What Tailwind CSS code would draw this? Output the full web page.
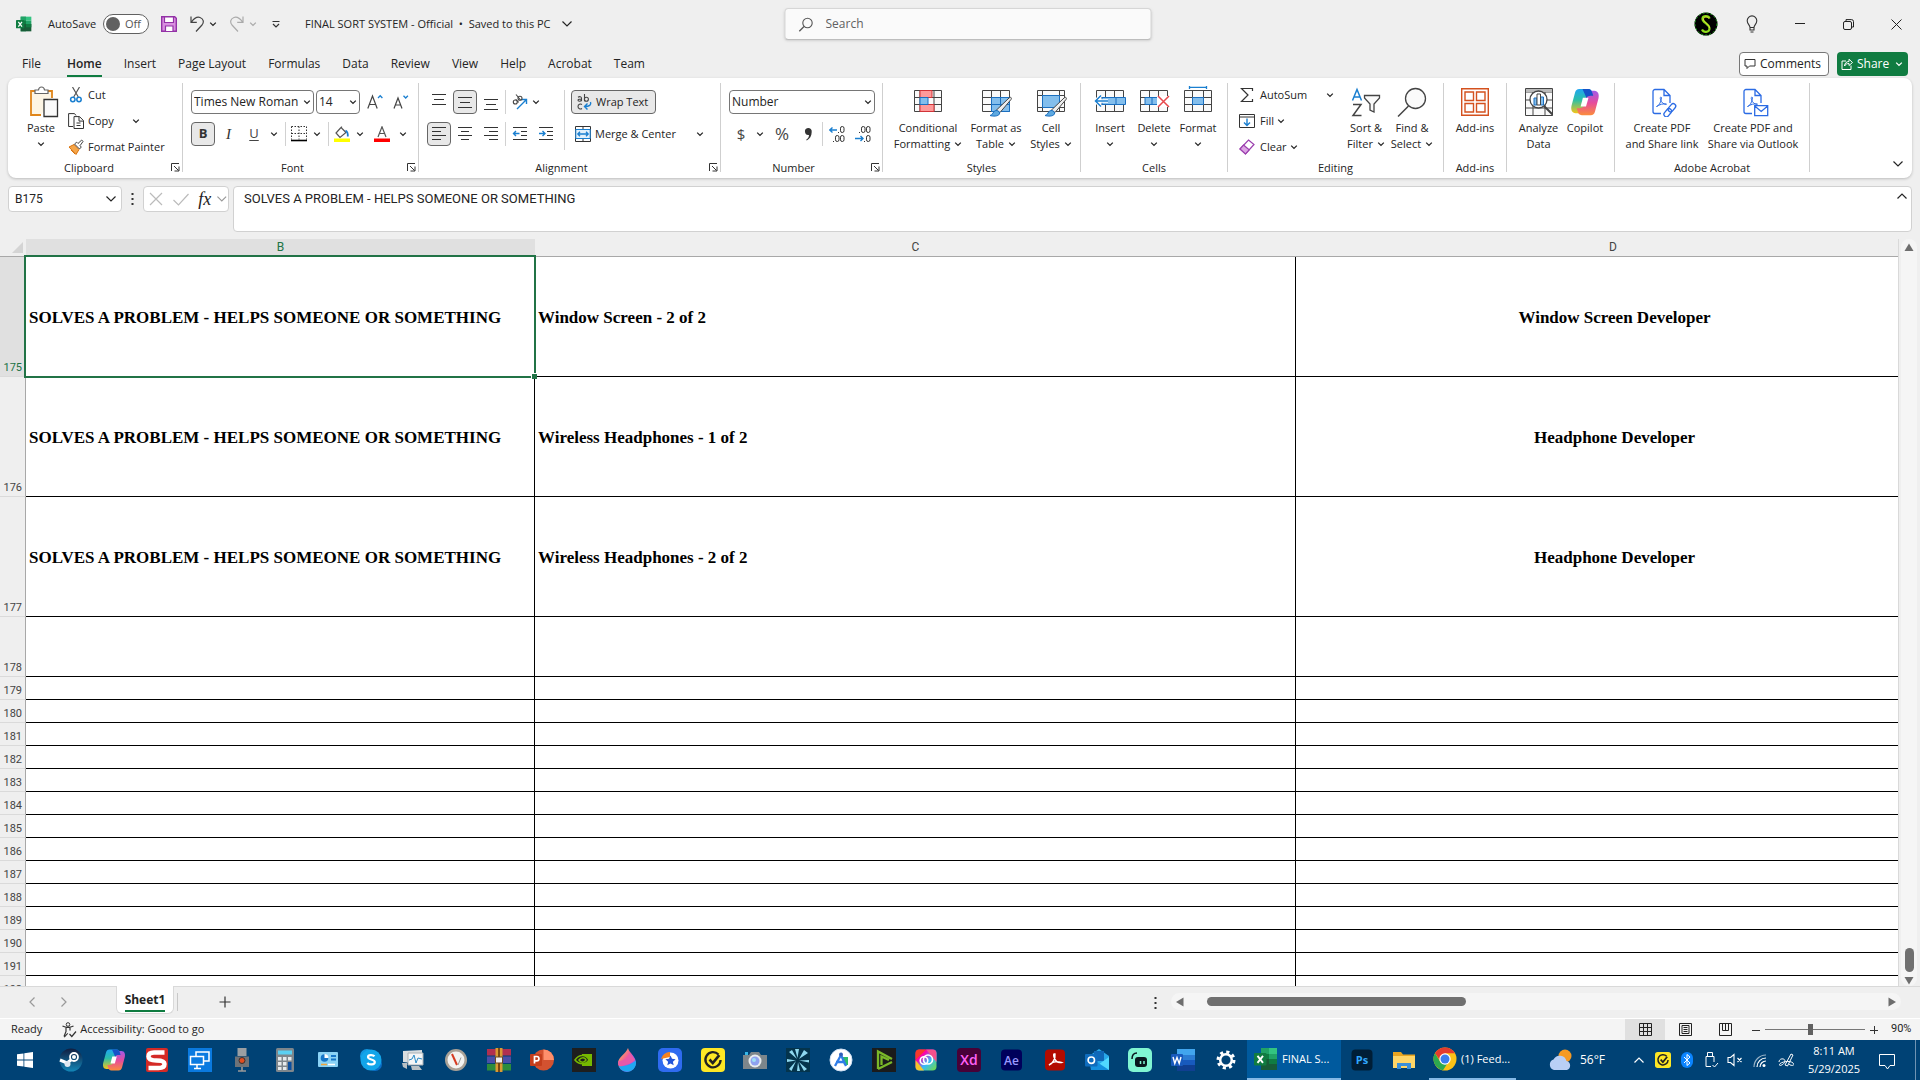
<!DOCTYPE html>
<html lang="en">
<head>
<meta charset="utf-8">
<title>FINAL SORT SYSTEM - Excel</title>
<script src="https://cdn.jsdelivr.net/npm/@tailwindcss/browser@4"></script>
</head>
<body class="h-screen overflow-hidden bg-[#efefef] font-['Open_Sans','Noto_Sans',sans-serif] text-[11px] text-[#242424]">
<svg class="absolute size-0" aria-hidden="true">
  <defs>
    <linearGradient id="cpA" x1="0" y1="0" x2="0" y2="1"><stop offset="0" stop-color="#1fa5f2"/><stop offset=".45" stop-color="#2bbfa8"/><stop offset="1" stop-color="#f5c518"/></linearGradient>
    <linearGradient id="cpB" x1="0" y1="0" x2="0" y2="1"><stop offset="0" stop-color="#a05be8"/><stop offset=".5" stop-color="#e74c9c"/><stop offset="1" stop-color="#fb8c3c"/></linearGradient>
    <linearGradient id="steamG" x1="0" y1="0" x2="0" y2="1"><stop offset="0" stop-color="#111d3f"/><stop offset="1" stop-color="#1387b8"/></linearGradient>
    <linearGradient id="ccG" x1="0" y1="0" x2="1" y2="1"><stop offset="0" stop-color="#f33"/><stop offset=".3" stop-color="#f0a"/><stop offset=".6" stop-color="#3bf"/><stop offset="1" stop-color="#7d3"/></linearGradient>
    <linearGradient id="paintG" x1="0" y1="0" x2="1" y2="1"><stop offset="0" stop-color="#ffd23c"/><stop offset=".45" stop-color="#f05a9b"/><stop offset=".65" stop-color="#8b5cf6"/><stop offset="1" stop-color="#22b8f0"/></linearGradient>
    <symbol id="chev" viewBox="0 0 8 8"><path d="M1.2 2.6 4 5.4l2.8-2.8" fill="none" stroke="currentColor" stroke-width="1.3"/></symbol>
    <symbol id="chevL" viewBox="0 0 12 12"><path d="M1.5 3.5 6 8l4.500-4.500" fill="none" stroke="currentColor" stroke-width="1.2"/></symbol>
    <symbol id="launch" viewBox="0 0 9 9"><path d="M.5 8V.5H8M3 3l4.500 4.500M8 3.500V8H3.500" fill="none" stroke="#333"/></symbol>
    <symbol id="copilot" viewBox="0 0 24 24">
      <path d="M7.500 1.500h7c2.200 0 3 1.500 3.500 3.500l.6 2h-2.300c-2.200 0-3 1-3.600 3l-2 7.500c-.6 2-1.500 3.500-3.700 3.500H4.500C1.500 21 .5 18 1.200 15L4 4.500c.6-2 1.500-3 3.500-3z" fill="url(#cpA)"/>
      <path d="M16.500 22.500h-7c-2.200 0-3-1.500-3.500-3.500l-.6-2h2.300c2.200 0 3-1 3.600-3l2-7.500C13.900 4.500 14.800 3 17 3h2.500c3 0 4 3 3.300 6L20 19.500c-.6 2-1.500 3-3.500 3z" fill="url(#cpB)"/>
      <path d="M10.300 8.500h4.500l-2 7H8.500z" fill="#fff"/><path d="M10 1.500h4.500c2.200 0 3 1.500 3.500 3.500l.6 2h-2.300c-1.500 0-2.500.6-3.100 1.700z" fill="#1553c8"/>
    </symbol>
    <symbol id="excel" viewBox="0 0 24 24"><path d="M7 1h8v22H7z" fill="#21a366"/><path d="M15 1h8v6h-8z" fill="#33c481"/><path d="M7 1h8v6H7z" fill="#21a366"/><path d="M7 7h8v5H7z" fill="#107c41"/><path d="M15 7h8v5h-8z" fill="#21a366"/><path d="M7 12h16v11H7z" fill="#185c37"/><path d="M15 12h8v5h-8z" fill="#107c41"/><rect y="6" width="12.500" height="12.500" rx="1" fill="#107c41"/><path d="m3.500 8.800 5.500 7M9 8.800l-5.500 7" stroke="#fff" stroke-width="1.900"/></symbol>
    <symbol id="norton" viewBox="0 0 24 24"><rect width="24" height="24" rx="4" fill="#fde725"/><path d="M17.500 6.500A7.600 7.600 0 1 0 19.600 12" fill="none" stroke="#222" stroke-width="2.300"/><path d="m8.500 11.500 3.300 3.600 6.500-8" fill="none" stroke="#222" stroke-width="2.600"/></symbol>
    <symbol id="pdf" viewBox="0 0 28 30"><path d="M11 26.500H5a2 2 0 0 1-2-2v-20a2 2 0 0 1 2-2h9l6 6V16M14 2.500v6h6" fill="none" stroke="#2b6be4" stroke-width="1.300"/><path d="M6.500 19.500c3-1 4.500-5 5-9-.9-1-1.700 0-1 2 1 3.500 3.500 5 6 4.700-3-1-7 .3-10 2.300z" fill="none" stroke="#2b6be4"/></symbol>
  </defs>
</svg>

<div class="flex h-full flex-col">
  <!-- Title bar -->
  <header class="relative flex h-12 shrink-0 items-center text-[11px]">
    <svg class="ml-4 size-4" viewBox="0 0 24 24"><use href="#excel"/></svg>
    <label for="autosave" class="ml-4 w-[51px]">AutoSave</label>
    <span class="relative ml-1 flex h-5 w-[46px] items-center rounded-full border border-[#616161] bg-white">
      <input id="autosave" type="checkbox" class="ml-[2px] size-[14px] appearance-none rounded-full bg-[#616161]"><span class="ml-[5px] text-[#555]">Off</span>
    </span>
    <button class="ml-3 size-4" aria-label="Save"><svg viewBox="0 0 16 16"><path d="M.7.7h13L15.300 2.300v13H.7z" fill="#d98fe0" stroke="#9332a6" stroke-width="1.400"/><path d="M3.500 1h9v5.500h-9zM4.500 10h7.500v5.500H4.500z" fill="#fff" stroke="#9332a6" stroke-width="1.200"/></svg></button>
    <button class="ml-3 size-4" aria-label="Undo"><svg viewBox="0 0 16 16"><path d="M2 .5v5.800h5.800M2.500 6C5 2.500 8 .5 11 1.500c3.500 1.300 4.300 4.600 2 7.500L7 15.500" fill="none" stroke="#444" stroke-width="1.200"/></svg></button>
    <svg class="ml-1 size-2"><use href="#chev"/></svg>
    <button class="ml-3 size-4" aria-label="Redo"><svg viewBox="0 0 16 16"><path d="M14 .5v5.800H8.200M13.500 6C11 2.500 8 .5 5 1.500 1.500 2.800.7 6.100 3 9l6 6.500" fill="none" stroke="#aaa" stroke-width="1.200"/></svg></button>
    <svg class="ml-1 size-2 text-[#aaa]"><use href="#chev"/></svg>
    <button class="ml-3.5 size-2.5" aria-label="Customize Quick Access Toolbar"><svg viewBox="0 0 10 10"><path d="M1.500 2.500h7M2 5l3 3 3-3" fill="none" stroke="#333" stroke-width="1.200"/></svg></button>
    <button class="ml-6 flex items-center gap-2 whitespace-pre text-[11px]">FINAL SORT SYSTEM - Official  •  Saved to this PC <svg class="size-3"><use href="#chevL"/></svg></button>
    <div class="absolute top-2 left-[calc(50%+8px)] flex h-8 w-[367px] -translate-x-1/2 items-center rounded border border-[#d6d6d6] border-b-[#bdbdbd] bg-[#fafafa] shadow-sm">
      <svg class="ml-[13px] size-[15px]" viewBox="0 0 15 15"><circle cx="9" cy="6" r="4.700" fill="none" stroke="#555" stroke-width="1.100"/><path d="M5.500 9.500.8 14.200" stroke="#555" stroke-width="1.300"/></svg>
      <input class="ml-3 w-60 text-[12px] outline-none placeholder:text-[#616161]" placeholder="Search" aria-label="Search">
    </div>
    <div class="ml-auto flex items-center">
      <svg class="mr-[10px] size-6" viewBox="0 0 24 24"><circle cx="12" cy="12" r="11.500" fill="#000"/><circle cx="12" cy="12" r="11" fill="none" stroke="#25b025" stroke-dasharray="2 2"/><path d="M15.500 6.500c-.8-3.200-6.500-3.200-7 0-.4 4.500 7.300 5 7 10.500-.4 3.500-6 4-7.500.500" fill="none" stroke="#8fdc1c" stroke-width="2.200"/><path d="M15 6.500c-1-2-5-2-5.500.5 0 3.500 6 5 6 9" fill="none" stroke="#f5e935" stroke-width=".8"/></svg>
      <button class="flex w-12 justify-center" aria-label="Tips"><svg class="h-[18px] w-3" viewBox="0 0 12 18"><path d="M4 12.500C4 10 1.200 9 1.200 5.700a4.800 4.800 0 0 1 9.600 0C10.800 9 8 10 8 12.500zM4 12.500V15h4v-2.500M4.500 17h3" fill="none" stroke="#333" stroke-width="1.100"/></svg></button>
      <button class="flex w-12 justify-center" aria-label="Minimize"><svg class="size-2.5" viewBox="0 0 10 10"><path d="M0 4.500h10" stroke="#222"/></svg></button>
      <button class="flex w-12 justify-center" aria-label="Restore"><svg class="size-[11px]" viewBox="0 0 11 11"><rect x=".5" y="2.500" width="8" height="8" rx="1.500" fill="none" stroke="#222"/><path d="M3 2V.6h5.500a2 2 0 0 1 2 2V8H9" fill="none" stroke="#222"/></svg></button>
      <button class="flex w-12 justify-center" aria-label="Close"><svg class="size-[11px]" viewBox="0 0 11 11"><path d="m.5.5 10 10m0-10-10 10" stroke="#222"/></svg></button>
    </div>
  </header>

  <!-- Ribbon tabs -->
  <nav class="flex h-[30px] shrink-0 items-center pt-0.5 pl-[11px] text-[12px] [&_button]:px-[11px]">
    <button>File</button>
    <button class="mt-1 ml-1 font-semibold"><span class="block border-b-2 border-[#107c41] pb-0.5">Home</span></button>
    <button>Insert</button><button>Page Layout</button><button>Formulas</button><button>Data</button><button>Review</button><button>View</button><button>Help</button><button>Acrobat</button><button>Team</button>
    <span class="mr-3 ml-auto flex gap-2 text-[12px]">
      <span class="flex h-6 w-[90px] items-center rounded border border-[#777] bg-white"><button class="flex items-center gap-1 !px-1"><svg class="size-3" viewBox="0 0 12 12"><path d="M1 1.500h10v6.500H5.500L3 10.500V8H1z" fill="none" stroke="#333"/></svg>Comments</button></span>
      <span class="flex h-6 w-[71px] items-center rounded bg-[#107c41] text-white"><button class="flex items-center gap-1 !px-1"><svg class="size-3" viewBox="0 0 12 12"><path d="M5 3H1v8.500h9V7.500M3.500 8c.3-3 2-4.500 4.500-4.500V1.200L11.500 4.500 8 7.500V5.500c-2 0-3.500.7-4.500 2.500z" fill="none" stroke="#fff"/></svg>Share <svg class="ml-0.5 size-2"><use href="#chev"/></svg></button></span>
    </span>
  </nav>

  <!-- Ribbon -->
  <div class="mx-2 flex h-[100px] shrink-0 rounded-lg bg-white pt-[5px] pb-[6px] shadow-[0_1px_3px_rgba(0,0,0,.22)] [&_h2]:h-2 [&_h2]:text-center [&_h2]:leading-2 [&_section]:relative [&_section]:flex [&_section]:shrink-0 [&_section]:flex-col [&_section]:justify-between [&_section]:border-r [&_section]:border-[#cfcfcf]">
    <section class="w-[175px]">
      <div class="flex pl-2">
        <button class="flex w-[50px] flex-col items-center leading-4">
          <span class="flex h-[37px] items-center pl-1"><svg class="size-8" viewBox="0 0 32 32"><path d="M14 29H4V5h21v7" fill="#fdf5e4" stroke="#e0861a" stroke-width="1.800"/><path d="M8 7.500V4h3.500c.5-4 5.500-4 6 0H21v3.500z" fill="#fff" stroke="#666" stroke-width="1.200"/><path d="M17 13.500h13.500v17H17z" fill="#fafafa" stroke="#333" stroke-width="1.300"/></svg></span>
          Paste<svg class="mt-1 size-2"><use href="#chev"/></svg>
        </button>
        <div class="flex flex-col gap-0.5 [&_button]:flex [&_button]:h-6 [&_button]:items-center [&_button]:gap-0.5 [&_button>svg:first-child]:mx-0.5 [&_button>svg:first-child]:size-4">
          <button><svg viewBox="0 0 16 16"><path d="M4.500 0l5.800 10M11.500 0 5.700 10" stroke="#555" stroke-width="1.200"/><g fill="none" stroke="#1a7fd0" stroke-width="1.500"><circle cx="4.800" cy="12.500" r="2.200"/><circle cx="11" cy="12.500" r="2.200"/></g></svg>Cut</button>
          <button><svg viewBox="0 0 16 16"><path d="M5 13.500H.6V.6h5.900L8 2.500M6 3.600h5.500l4 4v7.900H6zM11 3.600v4.500h4.400M8.500 10h4M8.500 12.500h4" fill="none" stroke="#333"/></svg>Copy<svg class="ml-4 size-2"><use href="#chev"/></svg></button>
          <button><svg viewBox="0 0 16 16"><path d="m1 8 5-2.500 5 5L8 15.500z" fill="#f5a64a" stroke="#d9730d"/><path d="M3 11l4 4" stroke="#d9730d"/><path d="m6.500 5 5 5 1.800-2-1.300-1.300 3-4.200L13.700 1 10 4.500 8.700 3.200z" fill="#fff" stroke="#444"/></svg>Format Painter</button>
        </div>
      </div>
      <h2 class="pr-3">Clipboard</h2>
      <button class="absolute right-0.5 bottom-0 size-[9px]" aria-label="Clipboard settings"><svg class="size-[9px]"><use href="#launch"/></svg></button>
    </section>

    <section class="w-[236px]">
      <div class="flex flex-col gap-2 pt-[7px] pl-2">
        <div class="flex h-6 gap-0.5">
          <span class="relative"><select aria-label="Font" class="h-6 w-[123px] appearance-none rounded border border-[#767676] bg-white px-0.5 text-[12px]"><option>Times New Roman</option></select><svg class="absolute top-2 right-[3px] size-2"><use href="#chev"/></svg></span>
          <span class="relative"><select aria-label="Font size" class="h-6 w-11 appearance-none rounded border border-[#767676] bg-white px-0.5 text-[12px]"><option>14</option></select><svg class="absolute top-2 right-[3px] size-2"><use href="#chev"/></svg></span>
          <span class="flex [&_button]:flex [&_button]:w-[26px] [&_button]:items-center [&_button]:justify-center [&_svg]:size-4">
            <button aria-label="Increase font size"><svg viewBox="0 0 16 16"><path d="M.8 14.500 5.500 2 10.200 14.500M2.300 10.500h6.400" fill="none" stroke="#444" stroke-width="1.200"/><path d="m11 4 2.200-2.300L15.400 4" fill="none" stroke="#1a7fd0" stroke-width="1.300"/></svg></button>
            <button aria-label="Decrease font size"><svg viewBox="0 0 16 16"><path d="M1 14.500 5 4l4 10.500M2.500 11h5" fill="none" stroke="#444" stroke-width="1.200"/><path d="m10.500 1.700 2.200 2.300 2.200-2.300" fill="none" stroke="#1a7fd0" stroke-width="1.300"/></svg></button>
          </span>
        </div>
        <div class="flex h-6 items-center [&_button]:flex [&_button]:h-6 [&_button]:items-center [&_button]:justify-center">
          <button class="w-6 rounded border border-[#666] bg-[#e8e8e8] text-[13px] font-bold text-[#333]">B</button>
          <button class="w-[27px] font-['Liberation_Serif',serif] text-[15px] italic text-[#333]">I</button>
          <button class="w-6 text-[13px] text-[#444] underline underline-offset-2">U</button>
          <button class="w-4" aria-label="Underline options"><svg class="size-2"><use href="#chev"/></svg></button>
          <span class="mx-[3px] h-6 w-px bg-[#d1d1d1]"></span>
          <button class="w-5" aria-label="Borders"><svg class="size-4" viewBox="0 0 16 16"><path d="M.5.500v13M15.500.500v13M.5.500h15M8 .5v13M.5 7.500h15" stroke="#333" stroke-dasharray="1.500 1.500" fill="none"/><path d="M0 14.500h16" stroke="#000" stroke-width="1.600"/></svg></button>
          <button class="w-4" aria-label="Border options"><svg class="size-2"><use href="#chev"/></svg></button>
          <span class="mx-[3px] h-6 w-px bg-[#d1d1d1]"></span>
          <button class="w-5" aria-label="Fill color"><svg class="size-4" viewBox="0 0 16 16"><path d="M7 1.500 2 7l4 4.500 6-5L7.500 2V.5" fill="none" stroke="#555" stroke-width="1.200"/><path d="M11.500 4.500c2 1 2.500 3 2.300 6" fill="none" stroke="#1a7fd0" stroke-width="1.800"/><path d="M0 12.500h16V16H0z" fill="#ff0"/></svg></button>
          <button class="w-4" aria-label="Fill options"><svg class="size-2"><use href="#chev"/></svg></button>
          <button class="w-[27px]" aria-label="Font color"><svg class="size-4" viewBox="0 0 16 16"><path d="M4 11 8 .8 12 11M5.300 7.500h5.400" fill="none" stroke="#555" stroke-width="1.200"/><path d="M0 12.500h16V16H0z" fill="#f00"/></svg></button>
          <button class="w-4" aria-label="Font color options"><svg class="size-2"><use href="#chev"/></svg></button>
        </div>
      </div>
      <h2 class="pr-4">Font</h2>
      <button class="absolute right-0.5 bottom-0 size-[9px]" aria-label="Font settings"><svg class="size-[9px]"><use href="#launch"/></svg></button>
    </section>

    <section class="w-[302px]">
      <div class="flex pt-[7px] pl-2">
        <div class="flex w-[137px] flex-col gap-2 [&_button]:flex [&_button]:h-6 [&_button]:w-6 [&_button]:items-center [&_button]:justify-center [&_button>svg]:size-4">
          <div class="flex gap-0.5">
            <button aria-label="Top align"><svg viewBox="0 0 16 16"><path d="M1 .500h14M3 5.500h10M1 10.500h14" stroke="#333"/></svg></button>
            <button class="rounded border border-[#666] bg-[#e8e8e8]" aria-label="Middle align"><svg viewBox="0 0 16 16"><path d="M1 3.500h14M3 8.500h10M1 13.500h14" stroke="#333"/></svg></button>
            <button aria-label="Bottom align"><svg viewBox="0 0 16 16"><path d="M1 5.500h14M3 10.500h10M1 15.500h14" stroke="#333"/></svg></button>
            <span class="h-6 w-px bg-[#d1d1d1]"></span>
            <button aria-label="Orientation"><svg viewBox="0 0 16 16"><path d="M5 15 14.500 5.500M10 5.500h4.500V10" fill="none" stroke="#1a7fd0" stroke-width="1.400"/><g fill="none" stroke="#444" stroke-width="1.100"><circle cx="3.300" cy="8" r="2"/><path d="m3.700 5.300 3 3"/><circle cx="8" cy="4.300" r="2"/><path d="M4 .500 8.500 6"/></g></svg></button>
            <svg class="mt-2 -ml-0.5 size-2"><use href="#chev"/></svg>
          </div>
          <div class="flex gap-0.5">
            <button class="rounded border border-[#666] bg-[#e8e8e8]" aria-label="Align left"><svg viewBox="0 0 16 16"><path d="M1 1.500h14M1 5.500h9M1 9.500h14M1 13.500h9" stroke="#333"/></svg></button>
            <button aria-label="Center"><svg viewBox="0 0 16 16"><path d="M1 1.500h14M4 5.500h8M1 9.500h14M4 13.500h8" stroke="#333"/></svg></button>
            <button aria-label="Align right"><svg viewBox="0 0 16 16"><path d="M1 1.500h14M6 5.500h9M1 9.500h14M6 13.500h9" stroke="#333"/></svg></button>
            <span class="h-6 w-px bg-[#d1d1d1]"></span>
            <button aria-label="Decrease indent"><svg viewBox="0 0 16 16"><path d="M1 1.500h14M9 5.500h6M9 9.500h6M1 13.500h14" stroke="#333"/><path d="M7.500 7.500H1.500M4 5 1.500 7.500 4 10" fill="none" stroke="#1a7fd0" stroke-width="1.400"/></svg></button>
            <button aria-label="Increase indent"><svg viewBox="0 0 16 16"><path d="M1 1.500h14M9 5.500h6M9 9.500h6M1 13.500h14" stroke="#333"/><path d="M1 7.500h6M4.500 5 7 7.500 4.500 10" fill="none" stroke="#1a7fd0" stroke-width="1.400"/></svg></button>
          </div>
        </div>
        <span class="h-[60px] w-px bg-[#d1d1d1]"></span>
        <div class="ml-1.5 flex flex-col items-start gap-2">
          <button class="flex h-6 w-[85px] items-center gap-[3px] rounded border border-[#666] bg-[#e8e8e8] pl-[5px]"><svg class="size-4" viewBox="0 0 16 16"><g fill="none" stroke="#444" stroke-width="1.100"><path d="M1 3.200c1.500-1 3.500-.7 3.500 1V7.300M4.500 5C2.500 5 1 5.200 1 6.300s2.500 1.500 3.500-.3M7.500 0v7.300"/><circle cx="9.400" cy="5.200" r="2"/><path d="M5 10.500c-1.500-1-4-.3-4 2s2.500 3 4 2"/></g><path d="M13.500 8c1 3-1 4.500-6 4.500M10.500 9.500l-3 3 3 3" fill="none" stroke="#1a7fd0" stroke-width="1.400"/></svg>Wrap Text</button>
          <button class="flex h-6 items-center gap-1 pl-1"><svg class="size-4" viewBox="0 0 16 16"><path d="M.5.500h15v15H.5zM.5 3.500h15M.5 12.500h15M8 .5v3M8 12.500v3" fill="none" stroke="#333"/><path d="M.8 3.500h14.400v9H.8z" fill="#e3f1fb" stroke="#1a7fd0"/><path d="M3 8h10M5 5.800 2.800 8 5 10.200M11 5.800 13.200 8 11 10.200" fill="none" stroke="#1a7fd0" stroke-width="1.300"/></svg>Merge &amp; Center<svg class="ml-4 size-2"><use href="#chev"/></svg></button>
        </div>
      </div>
      <h2 class="pr-4">Alignment</h2>
      <button class="absolute right-0.5 bottom-0 size-[9px]" aria-label="Alignment settings"><svg class="size-[9px]"><use href="#launch"/></svg></button>
    </section>

    <section class="w-[162px]">
      <div class="flex flex-col gap-2 pt-[7px] pl-2">
        <span class="relative h-6"><select aria-label="Number format" class="h-6 w-[146px] appearance-none rounded border border-[#767676] bg-white px-0.5 text-[12px]"><option>Number</option></select><svg class="absolute top-2 right-[10px] size-2"><use href="#chev"/></svg></span>
        <div class="flex h-6 items-center [&_button]:flex [&_button]:h-6 [&_button]:items-center [&_button]:justify-center">
          <button class="w-6 text-[15px] text-[#444]">$</button>
          <button class="w-3.5" aria-label="Currency options"><svg class="size-2"><use href="#chev"/></svg></button>
          <button class="w-[30px] text-[17px] text-[#444]">%</button>
          <button class="w-[22px]" aria-label="Comma style"><svg class="h-4 w-3" viewBox="0 0 12 16"><path d="M6 2a3.500 3.500 0 0 1 3.700 4c0 4-2 7-5 8.500l-.5-.8C6 12.500 7 11 7 9A3.500 3.500 0 1 1 6 2z" fill="#333"/></svg></button>
          <span class="mx-[3px] h-6 w-px bg-[#d1d1d1]"></span>
          <button class="w-[22px]" aria-label="Increase decimal"><svg class="size-4" viewBox="0 0 16 16"><path d="M8 4H.8M3.500 1.500.8 4l2.700 2.500" fill="none" stroke="#1a7fd0" stroke-width="1.400"/><g fill="none" stroke="#333"><rect x="11.500" y=".5" width="3.500" height="6" rx="1.700"/><rect x="11.500" y="9.500" width="3.500" height="6" rx="1.700"/><rect x="6.500" y="9.500" width="3.500" height="6" rx="1.700"/><path d="M9 6.500h1M4 15.500h1"/></g></svg></button>
          <button class="w-[30px]" aria-label="Decrease decimal"><svg class="size-4" viewBox="0 0 16 16"><path d="M0 12.500h8M5.500 10 8 12.500 5.500 15" fill="none" stroke="#1a7fd0" stroke-width="1.400"/><g fill="none" stroke="#333"><rect x="11.500" y=".5" width="3.500" height="6" rx="1.700"/><rect x="11.500" y="9.500" width="3.500" height="6" rx="1.700"/><rect x="6.500" y=".5" width="3.500" height="6" rx="1.700"/><path d="M4 6.500h1M9 15.500h1"/></g></svg></button>
        </div>
      </div>
      <h2 class="pr-4">Number</h2>
      <button class="absolute right-0.5 bottom-0 size-[9px]" aria-label="Number settings"><svg class="size-[9px]"><use href="#launch"/></svg></button>
    </section>

    <section class="w-[198px]">
      <div class="flex pl-[7px] leading-4 whitespace-nowrap [&_button]:flex [&_button]:flex-col [&_button]:items-center [&_button>span:first-child]:flex [&_button>span:first-child]:h-[37px] [&_button>span:first-child]:items-center">
        <button class="w-[76px]"><span><svg class="size-7" viewBox="0 0 28 28"><path d="M.5 2.500h27v21H.5zM.5 9.500h27M.5 16.500h27M6 2.500v21M13.500 2.500v21M20 2.500v21" fill="#fafafa" stroke="#444"/><path d="M6 2.500h12v7H6zM6 16.500h14v7H6z" fill="#ff9a9a" stroke="#d13438"/><path d="M6 9.500h8v7H6z" fill="#83beec" stroke="#1a6fc0"/></svg></span>Conditional<span class="flex items-center gap-1">Formatting <svg class="size-2"><use href="#chev"/></svg></span></button>
        <button class="w-[60px]"><span><svg class="h-[30px] w-8" viewBox="0 0 32 30"><path d="M2.500 3.500h27v21h-27zM2.500 10.500h27M2.500 17.500h27M11.500 3.500v21M20.500 3.500v21" fill="#fafafa" stroke="#444"/><path d="M11.500 10.500h18v14h-18z" fill="#83beec" stroke="#1a6fc0"/><path d="M11.500 17.500h18M20.500 10.500v14" stroke="#1a6fc0"/><path d="M16 23.500 29 11c2-1.500 3 0 2 1.500L20 25.500z" fill="#eee" stroke="#444"/><path d="M10 28.500c3 0 3-5 6-5s4 2 3.500 3.500c-1.500 2.500-6.500 2.500-9.500 1.500z" fill="#5ea9e0" stroke="#1a6fc0"/></svg></span>Format as<span class="flex items-center gap-1">Table <svg class="size-2"><use href="#chev"/></svg></span></button>
        <button class="w-[50px]"><span><svg class="h-[30px] w-8" viewBox="0 0 32 30"><path d="M2.500 3.500h27v21h-27zM2.500 8.500h27M2.500 20.500h27M7.500 3.500v21M24.500 3.500v21" fill="#fafafa" stroke="#444"/><path d="M7.500 8.500h17v12h-17z" fill="#83beec" stroke="#1a6fc0"/><path d="M16 23.500 29 11c2-1.500 3 0 2 1.500L20 25.500z" fill="#eee" stroke="#444"/><path d="M10 28.500c3 0 3-5 6-5s4 2 3.500 3.500c-1.500 2.500-6.500 2.500-9.500 1.500z" fill="#5ea9e0" stroke="#1a6fc0"/></svg></span>Cell<span class="flex items-center gap-1">Styles <svg class="size-2"><use href="#chev"/></svg></span></button>
      </div>
      <h2>Styles</h2>
    </section>

    <section class="w-[147px]">
      <div class="flex pl-[7px] leading-4 [&_button]:flex [&_button]:w-11 [&_button]:flex-col [&_button]:items-center [&_button>span:first-child]:flex [&_button>span:first-child]:h-[37px] [&_button>span:first-child]:items-center">
        <button><span><svg class="h-7 w-8" viewBox="0 0 32 28"><path d="M2.500 2.500h27v21h-27zM2.500 9.500h27M2.500 16.500h27M11.500 2.500v21M20.500 2.500v21" fill="#fafafa" stroke="#444"/><path d="M8 9.500h23.500v7H8zM22 9.500v7" fill="#83beec" stroke="#1a6fc0"/><path d="M14 13H1.500M7 7.500 1.500 13 7 18.500" fill="none" stroke="#fff" stroke-width="3.500"/><path d="M14 13H1.500M7 7.500 1.500 13 7 18.500" fill="none" stroke="#1a7fd0" stroke-width="1.500"/></svg></span>Insert<svg class="mt-1 size-2"><use href="#chev"/></svg></button>
        <button><span><svg class="h-7 w-8" viewBox="0 0 32 28"><path d="M2.500 2.500h27v21h-27zM2.500 9.500h27M2.500 16.500h27M11.500 2.500v21M20.500 2.500v21" fill="#fafafa" stroke="#444"/><path d="M7 9.500h14v7H7zM14 9.500v7" fill="#83beec" stroke="#1a6fc0"/><path d="M19 8h13v11H19z" fill="#fff"/><path d="m20 8 11 11M31 8 20 19" stroke="#e8484c" stroke-width="1.500"/></svg></span>Delete<svg class="mt-1 size-2"><use href="#chev"/></svg></button>
        <button><span><svg class="h-8 w-8" viewBox="0 0 32 32"><path d="M2.500 4.500h27v21h-27zM2.500 11.500h27M2.500 18.500h27M10.500 4.500v21M21.500 4.500v21" fill="#fafafa" stroke="#444"/><path d="M10.500 11.500h11v7h-11z" fill="#83beec" stroke="#1a6fc0"/><path d="M7.500 1.300h17M7.500 0v3M24.500 0v3" stroke="#1a7fd0" stroke-width="1.300"/></svg></span>Format<svg class="mt-1 size-2"><use href="#chev"/></svg></button>
      </div>
      <h2>Cells</h2>
    </section>

    <section class="w-[216px]">
      <div class="flex pl-[9px]">
        <div class="flex w-[105px] flex-col items-start gap-0.5 [&_button]:flex [&_button]:h-6 [&_button]:items-center [&_button]:gap-[3px] [&_button>svg:first-child]:mx-0.5 [&_button>svg:first-child]:size-4">
          <button class="w-full"><svg viewBox="0 0 16 16"><path d="M13.500 4V1.500H2.500L9 8l-6.500 6.500h11V12" fill="none" stroke="#333" stroke-width="1.200"/></svg>AutoSum<svg class="mr-2 ml-auto size-2"><use href="#chev"/></svg></button>
          <button><svg viewBox="0 0 16 16"><path d="M.5 1.500h15v13H.5zM.5 4h15" fill="none" stroke="#333"/><path d="M8 5.500v7M5 9.500l3 3 3-3" fill="none" stroke="#1a7fd0" stroke-width="1.400"/></svg>Fill<svg class="size-2"><use href="#chev"/></svg></button>
          <button><svg viewBox="0 0 16 16"><path d="M9.500 1 15 5.500 6.500 15 1 10z" fill="#fff" stroke="#9b3fae" stroke-width="1.200"/><path d="m4.500 6 5.700 4.800L6.500 15 1 10z" fill="#dca4e4" stroke="#9b3fae" stroke-width="1.200"/></svg>Clear<svg class="size-2"><use href="#chev"/></svg></button>
        </div>
        <button class="flex w-12 flex-col items-center leading-4"><span class="flex h-[37px] items-center"><svg class="size-[30px]" viewBox="0 0 30 30"><path d="M1.500 13.500 6 2.500l4.500 11M3 10h6" fill="none" stroke="#1a7fd0" stroke-width="1.500"/><path d="M2 17.500h8L2 28.500h8.500" fill="none" stroke="#444" stroke-width="1.500"/><path d="M13.500 8.500h15v2.500l-5.500 6v8l-4-2v-6l-5.500-6z" fill="#fafafa" stroke="#444" stroke-width="1.300"/></svg></span>Sort &amp;<span class="flex items-center gap-1">Filter <svg class="size-2"><use href="#chev"/></svg></span></button>
        <button class="flex w-11 flex-col items-center leading-4"><span class="flex h-[37px] items-center"><svg class="size-[30px]" viewBox="0 0 30 30"><circle cx="18.500" cy="11.500" r="10" fill="#fafafa" stroke="#444" stroke-width="1.300"/><path d="M11.500 19 1 29.500" stroke="#444" stroke-width="1.500"/></svg></span>Find &amp;<span class="flex items-center gap-1">Select <svg class="size-2"><use href="#chev"/></svg></span></button>
      </div>
      <h2>Editing</h2>
    </section>

    <section class="w-[63px]">
      <button class="flex flex-col items-center leading-4"><span class="flex h-[37px] items-center"><svg class="size-7" viewBox="0 0 28 28"><path d="M.7.7h26.600v26.600H.7zM4 4h8.500v8.500H4zM15.500 4H24v8.500h-8.500zM4 15.500h8.500V24H4zM15.500 15.500H24V24h-8.500z" fill="none" stroke="#d4511e" stroke-width="1.400"/></svg></span>Add-ins</button>
      <h2>Add-ins</h2>
    </section>

    <section class="w-[108px]">
      <div class="flex pl-2 leading-4">
        <button class="flex w-[47px] flex-col items-center"><span class="flex h-[37px] items-center"><svg class="size-7" viewBox="0 0 28 28"><path d="M.5.500h27v27H.5zM.5 4h27M.5 12h27M.5 20h27M8 4v23M20 4v23" fill="#fafafa" stroke="#444"/><path d="M1 1h26v3H1z" fill="#bbb"/><path d="m19 18 9 9" stroke="#444" stroke-width="2"/><circle cx="13.500" cy="11.500" r="8.500" fill="#fff" stroke="#444" stroke-width="1.300"/><path d="M9 10h3v7H9zM15.500 9h3v8h-3z" fill="#83beec" stroke="#1a6fc0"/><path d="M12 6h3.500v11H12z" fill="#fff" stroke="#444"/></svg></span>Analyze<span>Data</span></button>
        <button class="flex w-[46px] flex-col items-center"><span class="flex h-[37px] items-center"><svg class="size-[30px]"><use href="#copilot"/></svg></span>Copilot</button>
      </div>
    </section>

    <section class="w-[195px]">
      <div class="flex pl-1 leading-4 whitespace-nowrap">
        <button class="flex w-[86px] flex-col items-center"><span class="flex h-[37px] items-center pl-1"><svg class="h-[30px] w-7" viewBox="0 0 28 30"><use href="#pdf"/><g fill="none" stroke="#2b6be4" stroke-width="1.300" transform="rotate(-50 20 23)"><rect x="12" y="20.500" width="9" height="5" rx="2.500"/><rect x="18.500" y="20.500" width="9" height="5" rx="2.500"/></g></svg></span>Create PDF<span>and Share link</span></button>
        <button class="flex w-[96px] flex-col items-center"><span class="flex h-[37px] items-center pl-1"><svg class="h-[30px] w-7" viewBox="0 0 28 30"><use href="#pdf"/><path d="M13.700 18.700h13v10h-13zM13.700 19l6.500 5.500L26.700 19" fill="#fff" stroke="#2b6be4" stroke-width="1.300"/></svg></span>Create PDF and<span>Share via Outlook</span></button>
      </div>
      <h2>Adobe Acrobat</h2>
    </section>
    <button class="mr-2 mb-0.5 ml-auto self-end" aria-label="Ribbon display options"><svg class="size-3"><use href="#chevL"/></svg></button>
  </div>

  <!-- Formula bar -->
  <div class="flex h-[61px] shrink-0 items-start px-2 pt-2 font-[Roboto,'Open_Sans',sans-serif] text-[12px]">
    <span class="relative"><input aria-label="Name box" value="B175" class="h-[26px] w-[114px] rounded border border-[#d1d1d1] bg-white px-1.5"><svg class="absolute top-[7px] right-[5px] size-3"><use href="#chevL"/></svg></span>
    <svg class="mx-[9px] mt-[7px] h-3 w-[3px]" viewBox="0 0 3 12"><path d="M.5 0h2v2h-2zM.5 5h2v2h-2zM.5 10h2v2h-2z" fill="#333"/></svg>
    <span class="flex h-[26px] w-[86px] items-center rounded border border-[#d1d1d1] bg-white">
      <button class="ml-[5px]" aria-label="Cancel"><svg class="size-3.5" viewBox="0 0 14 14"><path d="m1 1 12 12M13 1 1 13" stroke="#bbb" stroke-width="1.200"/></svg></button>
      <button class="ml-2.5" aria-label="Enter"><svg class="h-3.5 w-4" viewBox="0 0 16 14"><path d="m.5 8 5 5 10-11" fill="none" stroke="#bbb" stroke-width="1.200"/></svg></button>
      <button class="ml-2 w-4 font-['Liberation_Serif',serif] text-[18px] italic leading-6 text-[#222]">fx</button>
      <svg class="ml-1 size-3 text-[#999]"><use href="#chevL"/></svg>
    </span>
    <span class="relative ml-1 flex h-[46px] flex-1"><textarea aria-label="Formula bar" class="h-[46px] w-full resize-none rounded border border-[#d1d1d1] bg-white px-2.5 pt-1 text-[13px] leading-4 outline-none">SOLVES A PROBLEM - HELPS SOMEONE OR SOMETHING</textarea><svg class="absolute top-1 right-1 size-3 rotate-180"><use href="#chevL"/></svg></span>
  </div>

  <!-- Worksheet -->
  <main class="flex min-h-0 flex-1">
    <div class="relative min-w-0 flex-1 overflow-hidden border-r border-[#d9d9d9]">
      <table class="w-[calc(100%+32px)] table-fixed border-separate border-spacing-0 font-['Liberation_Serif',serif] text-[17px] font-bold text-black [&_tbody_td]:border-b [&_tbody_td]:border-black [&_tbody_td]:bg-white [&_tbody_td]:p-0 [&_tbody_td]:pt-0.5 [&_tbody_td]:pl-[3px] [&_tbody_td:not(:last-child)]:border-r [&_tbody_td:last-child]:text-center [&_tbody_th]:border-r [&_tbody_th]:border-b [&_tbody_th]:border-r-[#a8a8a8] [&_tbody_th]:border-b-[#dadada] [&_tbody_th]:p-0 [&_tbody_th]:pr-[3px] [&_tbody_th]:text-right [&_tbody_th]:align-bottom [&_tbody_th]:font-[Roboto,sans-serif] [&_tbody_th]:text-[11px] [&_tbody_th]:leading-4 [&_tbody_th]:font-normal [&_tbody_th]:text-[#444] [&_thead_th]:h-[18px] [&_thead_th]:border-b [&_thead_th]:border-[#a8a8a8] [&_thead_th]:p-0 [&_thead_th]:pb-px [&_thead_th]:font-[Roboto,sans-serif] [&_thead_th]:text-[12px] [&_thead_th]:leading-[14px] [&_thead_th]:font-normal">
        <colgroup><col class="w-[26px]"><col class="w-[509px]"><col class="w-[761px]"><col></colgroup>
        <thead><tr><th aria-label="Select all"><svg class="ml-3 size-[11px]" viewBox="0 0 11 11"><path d="M11 0v11H0z" fill="#d4d4d4"/></svg></th><th class="bg-[#e0e0e0] text-[#217346]">B</th><th class="text-[#444]">C</th><th class="text-[#444]">D</th></tr></thead>
        <tbody>
          <tr class="h-[120px]"><th class="bg-[#e0e0e0]"><span class="text-[#217346]">175</span></th><td class="relative">SOLVES A PROBLEM - HELPS SOMEONE OR SOMETHING<span class="absolute -top-0.5 -right-0.5 -bottom-0.5 -left-0.5 border-2 border-[#217346]"></span><span class="absolute -right-[3px] -bottom-[3px] size-1.5 border-t border-l border-white bg-[#217346]"></span></td><td>Window Screen - 2 of 2</td><td>Window Screen Developer</td></tr>
          <tr class="h-[120px]"><th>176</th><td>SOLVES A PROBLEM - HELPS SOMEONE OR SOMETHING</td><td>Wireless Headphones - 1 of 2</td><td>Headphone Developer</td></tr>
          <tr class="h-[120px]"><th>177</th><td>SOLVES A PROBLEM - HELPS SOMEONE OR SOMETHING</td><td>Wireless Headphones - 2 of 2</td><td>Headphone Developer</td></tr>
          <tr class="h-[60px]"><th>178</th><td></td><td></td><td></td></tr>
          <tr class="h-[23px]"><th>179</th><td></td><td></td><td></td></tr>
          <tr class="h-[23px]"><th>180</th><td></td><td></td><td></td></tr>
          <tr class="h-[23px]"><th>181</th><td></td><td></td><td></td></tr>
          <tr class="h-[23px]"><th>182</th><td></td><td></td><td></td></tr>
          <tr class="h-[23px]"><th>183</th><td></td><td></td><td></td></tr>
          <tr class="h-[23px]"><th>184</th><td></td><td></td><td></td></tr>
          <tr class="h-[23px]"><th>185</th><td></td><td></td><td></td></tr>
          <tr class="h-[23px]"><th>186</th><td></td><td></td><td></td></tr>
          <tr class="h-[23px]"><th>187</th><td></td><td></td><td></td></tr>
          <tr class="h-[23px]"><th>188</th><td></td><td></td><td></td></tr>
          <tr class="h-[23px]"><th>189</th><td></td><td></td><td></td></tr>
          <tr class="h-[23px]"><th>190</th><td></td><td></td><td></td></tr>
          <tr class="h-[23px]"><th>191</th><td></td><td></td><td></td></tr>
          <tr class="h-[23px]"><th>192</th><td></td><td></td><td></td></tr>
        </tbody>
      </table>
    </div>
    <div class="mr-[3px] ml-0.5 flex w-4 flex-col items-center rounded-full bg-[#f5f5f5] pt-[3px]">
      <svg class="size-2.5" viewBox="0 0 10 10"><path d="M5 1.500 9.500 9h-9z" fill="#6e6e6e"/></svg>
      <span class="mt-auto mb-1 h-6 w-[9px] rounded-full bg-[#707070]"></span>
      <svg class="size-2.5" viewBox="0 0 10 10"><path d="M5 8.500.5 1h9z" fill="#6e6e6e"/></svg>
    </div>
  </main>

  <!-- Sheet tabs -->
  <div class="flex h-8 shrink-0 items-start border-t border-[#d9d9d9]">
    <button class="mt-[9px] ml-[26px]" aria-label="Previous sheet"><svg class="size-3 rotate-90 text-[#999]"><use href="#chevL"/></svg></button>
    <button class="mt-[9px] ml-5" aria-label="Next sheet"><svg class="size-3 -rotate-90 text-[#999]"><use href="#chevL"/></svg></button>
    <button class="-mt-px ml-[46px] h-7 w-[58px] rounded-b-md border border-t-0 border-[#d9d9d9] bg-white text-[12px] font-bold"><span class="border-b-2 border-[#107c41] pb-0.5">Sheet1</span></button>
    <span class="mt-1.5 ml-[3px] h-[18px] w-px bg-[#c8c8c8]"></span>
    <button class="mt-[9px] ml-[41px]" aria-label="New sheet"><svg class="size-3" viewBox="0 0 12 12"><path d="M6 .5v11M.5 6h11" stroke="#333" stroke-width="1.200"/></svg></button>
    <svg class="mt-2.5 ml-auto h-3 w-[3px]" viewBox="0 0 3 12"><path d="M.5 0h2v2h-2zM.5 5h2v2h-2zM.5 10h2v2h-2z" fill="#333"/></svg>
    <div class="mt-1.5 mr-[19px] ml-[14px] flex h-[17px] w-[38%] items-center rounded-full bg-[#f5f5f5] px-1">
      <svg class="size-2.5" viewBox="0 0 10 10"><path d="M1 5 8.500.5v9z" fill="#6e6e6e"/></svg>
      <span class="ml-[22px] h-[9px] w-[259px] rounded-full bg-[#707070]"></span>
      <svg class="ml-auto size-2.5" viewBox="0 0 10 10"><path d="M9 5 1.500.5v9z" fill="#6e6e6e"/></svg>
    </div>
  </div>

  <!-- Status bar -->
  <footer class="flex h-[22px] shrink-0 items-center border-t border-white bg-[#f4f4f4] pr-[7px] pl-[11px] text-[11px]">
    <span>Ready</span>
    <button class="ml-[19px] flex items-center gap-[3px]"><svg class="size-4" viewBox="0 0 16 16"><circle cx="7" cy="2.500" r="1.800" fill="none" stroke="#333"/><path d="M1.500 4c3.500 1.700 7.500 1.700 11 0M5 5.500v4l-2 5M9 5.500v3M3 15c1.500 0 2-3 4-3.500M8.500 12l2.300 2.500L15 9.500" fill="none" stroke="#333" stroke-width="1.200"/></svg>Accessibility: Good to go</button>
    <div class="ml-auto flex h-full items-center">
      <button class="flex h-full w-10 items-center justify-center bg-[#e0e0e0]" aria-label="Normal view"><svg class="size-[13px]" viewBox="0 0 13 13"><path d="M.5.500h12v12H.5zM4.500 0v13M8.500 0v13M0 4.500h13M0 8.500h13" fill="none" stroke="#222"/></svg></button>
      <button class="flex h-full w-10 items-center justify-center" aria-label="Page layout view"><svg class="size-[13px]" viewBox="0 0 13 13"><path d="M.5.500h12v12H.5zM3 2.500h7v8H3zM4.500 4.500h4M4.500 6.500h4M4.500 8.500h4" fill="none" stroke="#222"/></svg></button>
      <button class="flex h-full w-10 items-center justify-center" aria-label="Page break preview"><svg class="size-[13px]" viewBox="0 0 13 13"><path d="M.5.500h12v12H.5zM3.500.5v7h6v-7M6.500.5v7" fill="none" stroke="#222"/></svg></button>
      <button class="ml-0.5 w-[18px]" aria-label="Zoom out"><svg class="mx-auto size-2" viewBox="0 0 8 8"><path d="M0 4.500h8" stroke="#333"/></svg></button>
      <input type="range" aria-label="Zoom" min="0" max="100" value="45" class="h-4 w-[100px] appearance-none bg-[linear-gradient(#777,#777)] bg-[length:100%_1px] bg-center bg-no-repeat [&::-webkit-slider-thumb]:h-[11px] [&::-webkit-slider-thumb]:w-[5px] [&::-webkit-slider-thumb]:appearance-none [&::-webkit-slider-thumb]:bg-[#616161]">
      <button class="w-[18px]" aria-label="Zoom in"><svg class="mx-auto size-2" viewBox="0 0 8 8"><path d="M0 4.500h8M4.500 0v8" stroke="#333"/></svg></button>
      <span class="ml-2 w-[22px] font-[Roboto,sans-serif]">90%</span>
    </div>
  </footer>

  <!-- Windows taskbar -->
  <nav class="flex h-10 shrink-0 items-center bg-[#004275] text-[12px] text-white" aria-label="Taskbar">
    <button class="flex w-[50px] justify-center" aria-label="Start"><svg class="size-4" viewBox="0 0 16 16"><path d="M0 2.300 6.500 1.400v6.100H0zM7.300 1.300 16 0v7.500H7.300zM0 8.400h6.500v6.200L0 13.700zM7.300 8.400H16V16l-8.700-1.300z" fill="#fff"/></svg></button>
    <div class="flex flex-1 [&_button]:flex [&_button]:flex-1 [&_button]:justify-center [&_svg]:size-6">
      <button aria-label="Steam"><svg viewBox="0 0 24 24"><circle cx="12" cy="12" r="11.500" fill="url(#steamG)"/><path d="m1 12 7 3 4-3" stroke="#fff" stroke-width="3" fill="none"/><circle cx="15" cy="9" r="4" fill="none" stroke="#fff" stroke-width="1.800"/><circle cx="15" cy="9" r="2" fill="#fff"/><circle cx="8.500" cy="16" r="3" fill="#dfe8f0"/></svg></button>
      <button aria-label="Copilot"><svg><use href="#copilot"/></svg></button>
      <button aria-label="Snagit"><svg viewBox="0 0 24 24"><rect x="1" width="22" height="24" rx="2" fill="#d42a26"/><path d="M19.500 4.500H9c-3.500 0-5.500 1.500-5.500 4 0 3.500 3 4 8 4s8 .5 8 3.500-2.500 4-6 4h-10" fill="none" stroke="#fff" stroke-width="4.500"/></svg></button>
      <button aria-label="Remote Desktop"><svg viewBox="0 0 24 24"><path d="M0 0h24v24H0z" fill="#0a7ae0"/><path d="M8 4h13v9H8z" fill="none" stroke="#fff" stroke-width="1.500"/><path d="M2.500 8.500h13v8h-13z" fill="#0a7ae0" stroke="#fff" stroke-width="1.500"/><path d="M9 17v3M6 20.500h7" stroke="#fff" stroke-width="1.500"/></svg></button>
      <button aria-label="Voice Recorder"><svg viewBox="0 0 24 24"><path d="M7.500 0h9v8h-9z" fill="#9a9fa3"/><path d="M5 8.500h14V19H5z" fill="#6e7378"/><circle cx="12" cy="12.500" r="3" fill="#e04d1f" stroke="#333"/><path d="M12 19v4M8 23h8" stroke="#999" stroke-width="1.600"/></svg></button>
      <button aria-label="Calculator"><svg viewBox="0 0 24 24"><rect x="3" width="18" height="24" rx="1.500" fill="#7e868c"/><path d="M5 2.500h14v4H5z" fill="#5bd0f2"/><path d="M5 9h3.500v3.500H5zM10 9h3.500v3.500H10zM15 9h3.500v3.500H15zM5 14h3.500v3.500H5zM10 14h3.500v3.500H10zM5 19h3.500v3H5zM10 19h3.500v3H10z" fill="#e6eaec"/><path d="M15 14h3.500v8H15z" fill="#0b4fa0"/></svg></button>
      <button aria-label="Control Panel"><svg viewBox="0 0 24 24"><rect x="2" y="4" width="20" height="15" rx="1" fill="#8ad2f5"/><circle cx="8.500" cy="10" r="3.800" fill="#1575c8"/><path d="M8.500 10V6a4 4 0 0 1 4 4z" fill="#fff"/><path d="M15 7h5v2h-5zM15 10.500h5v2h-5z" fill="#1575c8"/><path d="M5 16.500h6" stroke="#f2a53a" stroke-width="1.500"/><path d="M12 16.500h7" stroke="#fff" stroke-width="1.500"/></svg></button>
      <button aria-label="Skype"><svg viewBox="0 0 24 24"><circle cx="8" cy="8" r="7" fill="#1196e0"/><circle cx="16" cy="16" r="7" fill="#0a6fc8"/><circle cx="12" cy="12" r="10.500" fill="#12a5ea"/><path d="M15.500 8.300c-1.500-1.600-6.500-1.700-6.500.8 0 3 6.800 1.800 6.800 5 0 3-5.500 3-7.500.8" fill="none" stroke="#fff" stroke-width="2.200"/></svg></button>
      <button aria-label="Performance Monitor"><svg viewBox="0 0 24 24"><path d="m2 3 19-1v14L2 14z" fill="#d8dde0"/><path d="M7 5h15v12H7z" fill="#f4f6f7" stroke="#a9b0b5"/><path d="m8 12 3-1 2-4 2 8 2-5 4 1" fill="none" stroke="#2a8cc8"/><path d="M10 18h8l3 4H11zM1 15h5v6l-4-2z" fill="#b9c0c4"/></svg></button>
      <button aria-label="Benchmark"><svg viewBox="0 0 24 24"><circle cx="12" cy="12" r="11" fill="#a9a196"/><circle cx="12" cy="12" r="8.500" fill="#f3f3f1"/><path d="m8 6 5 11" stroke="#d63b22" stroke-width="2"/><path d="M17 9.500 14 17" stroke="#999"/></svg></button>
      <button aria-label="WinRAR"><svg viewBox="0 0 24 24"><path d="M0 1h24v6.500H0z" fill="#b03050"/><path d="M0 8.500h24v6.500H0z" fill="#4a4fa8"/><path d="M0 16h24v6.500H0z" fill="#2c8c3c"/><path d="M8.500 0h7v24h-7z" fill="#d99a33"/><path d="M12 0v9M12 15v9" stroke="#7b4a12" stroke-width="2"/><path d="M8.500 9h7v6h-7z" fill="#eee" stroke="#6b4a22"/></svg></button>
      <button aria-label="PowerPoint"><svg viewBox="0 0 24 24"><circle cx="13.500" cy="12" r="10.500" fill="#d35230"/><path d="M13.500 1.500A10.500 10.500 0 0 1 24 12H13.500z" fill="#ff8f6b"/><rect y="6" width="12" height="12" rx="1" fill="#c43e1c"/><path d="M4.500 15.500v-7h2.200c3 0 3 4.300 0 4.300H4.500" fill="none" stroke="#fff" stroke-width="1.700"/></svg></button>
      <button aria-label="NVIDIA"><svg viewBox="0 0 24 24"><path d="M0 0h24v24H0z" fill="#1e1e1e"/><path d="M10 6h10v12H10z" fill="#76b900"/><path d="M3 12c4-6 11-6 14 0-3 5-10 5-14 0z" fill="#1e1e1e" stroke="#76b900" stroke-width="1.600"/><path d="M7 12c2-3 6-3 7 0-2 3-5 3-7 0z" fill="none" stroke="#76b900" stroke-width="1.500"/></svg></button>
      <button aria-label="Paint 3D"><svg viewBox="0 0 24 24"><path d="M13 0c1 5 8 8 8 15a9 9 0 0 1-18 0C3 9 11 6 13 0z" fill="url(#paintG)"/><path d="M3.500 13C8 13 12 11 14.500 5c2.500 2.500 4.500 4.500 5.700 7-4 4.500-11 6-17 5z" fill="#e85aa8"/><path d="M3.700 18c6 1 12-1.500 17.200-5C22 25 7 27 3.700 18z" fill="#20a8f0"/></svg></button>
      <button aria-label="Avast"><svg viewBox="0 0 24 24"><rect width="24" height="24" rx="5" fill="#2f6bf0"/><circle cx="12.500" cy="12.500" r="8" fill="#fff"/><path d="M3 11a9 9 0 0 1 9-7v5z" fill="#f58220"/><path d="m12.500 7.500 1.500 3.300 3.600.4-2.700 2.500.8 3.600-3.200-1.800-3.200 1.800.8-3.600-2.700-2.500 3.600-.4z" fill="#2355d8"/></svg></button>
      <button aria-label="Norton"><svg><use href="#norton"/></svg></button>
      <button aria-label="Camera"><svg viewBox="0 0 24 24"><path d="M0 7h6l2-3h8l2 3h6v14H0z" fill="#7d868b"/><path d="M2 4h3v3H2z" fill="#35b8e8"/><circle cx="12" cy="13" r="6.500" fill="#e8ecee"/><circle cx="12" cy="13" r="4.500" fill="#8fa2f0"/><circle cx="11" cy="12" r="2" fill="#9fe0f5"/></svg></button>
      <button aria-label="Filmora"><svg viewBox="0 0 24 24"><path d="M0 0h24v24H0z" fill="#04344c"/><g fill="#8fd8ee"><path d="m9 1 4 0-1.500 9zM3 4l3-2 5 9zM18 2l4 3-9 6zM1 11l9 1.500L1 14zM23 12l-10 .5 10 2zM11 23l1-9 2 9zM3 21l7-8-4.500 10zM21 21l-8-7 5 9z"/></g></svg></button>
      <button aria-label="App Studio"><svg viewBox="0 0 24 24"><circle cx="12" cy="12" r="11" fill="#fff" stroke="#cfe0f5"/><path d="M13 9h6v8h-4z" fill="#2bbd6a"/><path d="m6 18 6-11 5 11M7 14h9" fill="none" stroke="#2f7de8" stroke-width="2.300"/><circle cx="12" cy="6.500" r="2" fill="#2f5fb8"/></svg></button>
      <button aria-label="NCH Player"><svg viewBox="0 0 24 24"><path d="M0 0h24v24H0z" fill="#1b1b1b"/><path d="M6 21V3.500L20 11M6 21l14-7M9.500 17V8.500L17 12" fill="none" stroke="#7ab829" stroke-width="2.300"/></svg></button>
      <button aria-label="Creative Cloud"><svg viewBox="0 0 24 24"><rect x="1.500" y="1.500" width="21" height="21" rx="4" fill="url(#ccG)"/><path d="M12 1.500h6.500a4 4 0 0 1 4 4V14z" fill="#f5508c"/><path d="M5.500 1.500H12L1.500 12V5.500a4 4 0 0 1 4-4z" fill="#f7392b"/><path d="M1.500 12v6.500a4 4 0 0 0 4 4H10z" fill="#f5c62a"/><circle cx="10" cy="12.500" r="3.800" fill="none" stroke="#fff" stroke-width="1.600"/><circle cx="14" cy="11.500" r="4.500" fill="none" stroke="#fff" stroke-width="1.600"/></svg></button>
      <button aria-label="Adobe XD"><svg viewBox="0 0 24 24"><rect width="24" height="24" rx="4" fill="#470137"/><text x="12" y="17" text-anchor="middle" font-size="14" font-weight="600" fill="#ff61f6">Xd</text></svg></button>
      <button aria-label="After Effects"><svg viewBox="0 0 24 24"><rect x="1" y="1.500" width="21" height="21" rx="4" fill="#00005b"/><text x="11.500" y="16.500" text-anchor="middle" font-size="12" font-weight="600" fill="#9999ff">Ae</text></svg></button>
      <button aria-label="Acrobat"><svg viewBox="0 0 24 24"><rect x="2" y="1.500" width="20" height="21" rx="4" fill="#b30b00"/><path d="M6 17c4-1.500 6.500-6.500 6-11-1.500-.7-1.700 1-.8 3.500 1.200 3.500 4 5.500 7 5-4-1.500-9-.5-12.200 2.500z" fill="none" stroke="#fff" stroke-width="1.400"/></svg></button>
      <button aria-label="Outlook"><svg viewBox="0 0 24 24"><path d="M4 8 14 1l10 7v14H6z" fill="#28a8ea"/><path d="M9 3h10v10H9z" fill="#1068b8"/><path d="m6 22 18-13v13z" fill="#50d9ff"/><path d="m6 10 18 12H6z" fill="#1490df"/><rect y="6" width="12.500" height="12.500" rx="1" fill="#0f6cbd"/><circle cx="6.300" cy="12.200" r="3.200" fill="none" stroke="#fff" stroke-width="1.600"/></svg></button>
      <button aria-label="Streamlabs"><svg viewBox="0 0 24 24"><rect width="24" height="24" rx="5" fill="#80f5d2"/><rect x="7" y="9" width="12" height="10" rx="3" fill="#09161d"/><path d="M12.500 13v3M16 13v3" stroke="#80f5d2" stroke-width="1.500"/><path d="M4 11c0-4 2-6 5-6" fill="none" stroke="#09161d" stroke-width="1.500"/></svg></button>
      <button aria-label="Word"><svg viewBox="0 0 24 24"><path d="M6 1h18v6H6z" fill="#41a5ee"/><path d="M6 7h18v5H6z" fill="#2b7cd3"/><path d="M6 12h18v5H6z" fill="#185abd"/><path d="M6 17h18v6H6z" fill="#103f91"/><rect y="6" width="12" height="12" rx="1" fill="#185abd"/><path d="m2 9 1.800 6.500L6 9.500l2.200 6L10 9" fill="none" stroke="#fff" stroke-width="1.400"/></svg></button>
      <button aria-label="Settings"><svg viewBox="0 0 24 24"><circle cx="12" cy="12" r="5.800" fill="none" stroke="#fff" stroke-width="2.500"/><circle cx="12" cy="12" r="8" fill="none" stroke="#fff" stroke-width="3" stroke-dasharray="3.140 3.140"/></svg></button>
    </div>
    <button class="flex h-10 w-[94px] items-center gap-1 border-b-2 border-[#85b9e6] bg-[#005a9e] pl-[7px] whitespace-nowrap text-[11px]"><svg class="size-6"><use href="#excel"/></svg>FINAL S...</button>
    <button class="flex w-[42px] justify-center" aria-label="Photoshop"><svg class="size-[22px]" viewBox="0 0 22 22"><rect x=".5" y=".5" width="21" height="21" rx="4" fill="#001e36"/><text x="11" y="15" text-anchor="middle" font-size="11" font-weight="700" fill="#31a8ff">Ps</text></svg></button>
    <button class="flex w-[42px] justify-center" aria-label="File Explorer"><svg class="size-[22px]" viewBox="0 0 22 22"><path d="M0 3h8l2 2.500h12V19H0z" fill="#e9a520"/><path d="M0 7h22v12H0z" fill="#ffd667"/><path d="M4 20v-6h14v6h-4v-3H8v3z" fill="#3a8fd8"/></svg></button>
    <button class="ml-1 flex h-10 w-[87px] items-center gap-1 border-b-2 border-[#85b9e6] pl-1 whitespace-nowrap text-[11px]"><svg class="size-6 shrink-0" viewBox="0 0 24 24"><circle cx="12" cy="12" r="11.500" fill="#fbc116"/><path d="M2 6.300A11.500 11.500 0 0 1 22 6.300H12L7.500 14z" fill="#e33b2e"/><path d="M2 6.300 8 16l6 1-4 6.300A11.500 11.500 0 0 1 2 6.300z" fill="#2da94f"/><circle cx="12" cy="12" r="5.700" fill="#fff"/><circle cx="12" cy="12" r="4.500" fill="#3b7ded"/></svg>(1) Feed...</button>
    <button class="mr-[9px] ml-8 flex w-[70px] items-center gap-2 text-[12px]"><svg class="size-6" viewBox="0 0 24 24"><circle cx="17" cy="8" r="6.500" fill="#f59a23"/><path d="M6 22a5.500 5.500 0 0 1-.5-10.500 7 7 0 0 1 13 1.500A4.700 4.700 0 0 1 19 22z" fill="#b9cff5"/></svg>56°F</button>
    <div class="flex items-center [&>button]:flex [&>button]:w-6 [&>button]:justify-center">
      <button aria-label="Show hidden icons"><svg class="size-3 rotate-180"><use href="#chevL"/></svg></button>
      <button aria-label="Norton"><svg class="size-4"><use href="#norton"/></svg></button>
      <button aria-label="Bluetooth"><svg class="h-4 w-3" viewBox="0 0 12 16"><rect width="12" height="16" rx="6" fill="#0a84ff"/><path d="m3 5 6 6-3 2.500v-11L9 5l-6 6" fill="none" stroke="#fff"/></svg></button>
      <button aria-label="USB"><svg class="size-4" viewBox="0 0 16 16"><path d="M4.500.5h5v4h-5zM3 4.500h8V10M3 4.500v10h5M9.500 13l2 2 3.500-4" fill="none" stroke="#fff"/></svg></button>
      <button aria-label="Volume"><svg class="size-4" viewBox="0 0 16 16"><path d="M1 5.500h2.500L7 2.500v11L3.500 10.500H1zM10.500 6l4 4m0-4-4 4" fill="none" stroke="#fff" stroke-width="1.100"/></svg></button>
      <button aria-label="Network"><svg class="size-4" viewBox="0 0 16 16"><g fill="none" stroke="#fff" stroke-width="1.200"><path d="M3 15A12 12 0 0 1 15 3" opacity=".6"/><path d="M6 15a9 9 0 0 1 9-9M9 15a6 6 0 0 1 6-6"/></g><circle cx="13" cy="13.500" r="1.500" fill="#fff"/></svg></button>
      <button class="ml-[3px]" aria-label="Pen"><svg class="size-4" viewBox="0 0 16 16"><path d="M7 13 13 2l2 1-5.500 11zM1 10c0-4 6-4 6-1s-6 6-5.500 3.500S12 8 15 11s-3 3-4 1" fill="none" stroke="#fff"/></svg></button>
      <time class="ml-[3px] w-[66px] text-center text-[11px] leading-[18px]">8:11 AM<br>5/29/2025</time>
      <button class="ml-2" aria-label="Notifications"><svg class="mt-1 size-4" viewBox="0 0 16 16"><path d="M.5.500h15v11h-4.500L8.500 15 6 11.500H.5z" fill="none" stroke="#fff"/></svg></button>
      <span class="ml-4 h-10 w-[5px] border-l border-[#6f93b3]"></span>
    </div>
  </nav>
</div>
</body>
</html>
